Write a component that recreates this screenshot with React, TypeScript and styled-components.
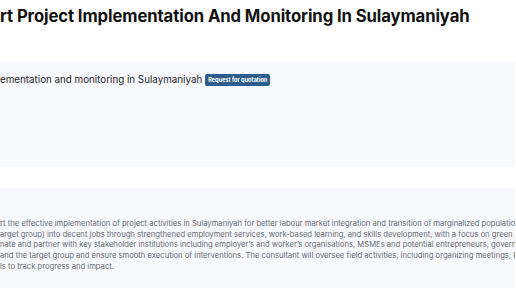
import React from "react";
import styled, { createGlobalStyle } from "styled-components";

const Global = createGlobalStyle`
  html, body { margin: 0; padding: 0; background: #ffffff; overflow: hidden; }
  body { font-family: Inter, "Noto Sans", sans-serif; }
`;

const Page = styled.div`
  width: 515px;
  height: 288px;
  overflow: hidden;
  display: flex;
  flex-direction: column;
  gap: 21px;
`;

const Title = styled.h1`
  flex-shrink: 0;
  margin: 0 0 -21px 0;
  padding: 5px 0 0 0;
  height: 62px;
  box-sizing: border-box;
  font-size: 16.7px;
  line-height: 22px;
  font-weight: 700;
  color: #111111;
  white-space: nowrap;
  letter-spacing: -0.1px;
`;

const Panel = styled.section<{ $height?: number; $pad: number }>`
  flex-shrink: 0;
  background: #f8f9fd;
  padding-top: ${(p) => p.$pad}px;
  box-sizing: border-box;
  ${(p) => (p.$height ? `height: ${p.$height}px;` : "flex-grow: 1;")}
`;

const SubRow = styled.div`
  display: flex;
  align-items: center;
  gap: 3px;
  white-space: nowrap;
`;

const Subtitle = styled.h2`
  margin: 0;
  font-size: 9.8px;
  line-height: 14px;
  font-weight: 400;
  color: #1d1d1f;
`;

const Badge = styled.span`
  display: inline-flex;
  align-items: center;
  height: 12px;
  padding: 0 3px;
  border-radius: 2px;
  background: #2c5d8c;
  color: #ffffff;
  font-size: 5.6px;
  font-weight: 700;
`;

const Body = styled.div`
  font-size: 7.65px;
  line-height: 10.7px;
  color: #666a70;
`;

const Line = styled.div`
  white-space: nowrap;
`;

const lines = [
  "rt the effective implementation of project activities in Sulaymaniyah for better labour market integration and transition of marginalized populations (",
  "arget group) into decent jobs through strengthened employment services, work-based learning, and skills development, with a focus on green jobs",
  "nate and partner with key stakeholder institutions including employer’s and worker’s organisations, MSMEs and potential entrepreneurs, government",
  "and the target group and ensure smooth execution of interventions. The consultant will oversee field activities, including organizing meetings, FGDs",
  "ls to track progress and impact.",
];

export default function App() {
  return (
    <>
      <Global />
      <Page>
        <Title>rt Project Implementation And Monitoring In Sulaymaniyah</Title>
        <Panel $height={105} $pad={11}>
          <SubRow>
            <Subtitle>ementation and monitoring in Sulaymaniyah</Subtitle>
            <Badge>Request for quotation</Badge>
          </SubRow>
        </Panel>
        <Panel $pad={31}>
          <Body>
            {lines.map((l, i) => (
              <Line key={i}>{l}</Line>
            ))}
          </Body>
        </Panel>
      </Page>
    </>
  );
}
